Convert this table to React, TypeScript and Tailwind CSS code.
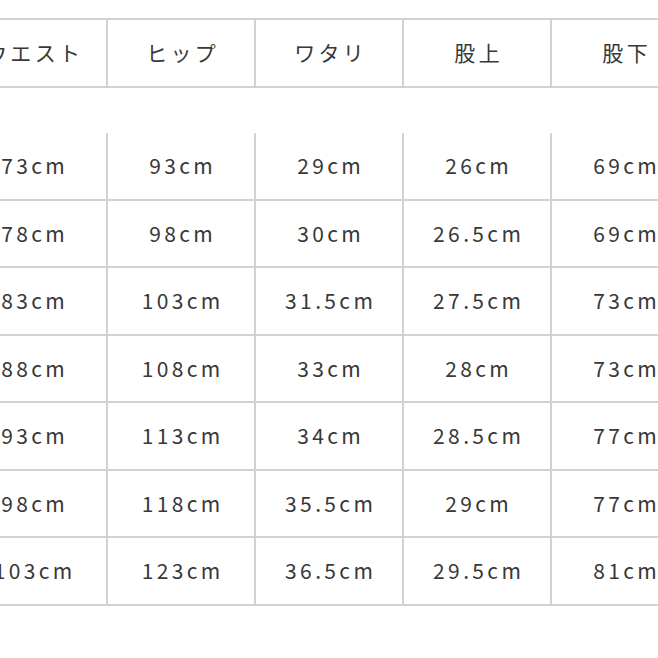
const headers = ['ウエスト', 'ヒップ', 'ワタリ', '股上', '股下'];

const rows = [
  ['73cm', '93cm', '29cm', '26cm', '69cm'],
  ['78cm', '98cm', '30cm', '26.5cm', '69cm'],
  ['83cm', '103cm', '31.5cm', '27.5cm', '73cm'],
  ['88cm', '108cm', '33cm', '28cm', '73cm'],
  ['93cm', '113cm', '34cm', '28.5cm', '77cm'],
  ['98cm', '118cm', '35.5cm', '29cm', '77cm'],
  ['103cm', '123cm', '36.5cm', '29.5cm', '81cm'],
];

function Cell({ text }: { text: string }) {
  return (
    <div className="w-[148px] shrink-0 h-full flex items-center justify-center border-r-2 border-[#d2d2d2]">
      <span className="pl-[0.16em] tracking-[0.16em]">{text}</span>
    </div>
  );
}

export default function App() {
  return (
    <div
      className="w-[658px] h-[658px] overflow-hidden bg-white text-[#383838] text-[21px]"
      style={{ fontFamily: '"Noto Sans CJK JP", "Noto Sans", sans-serif' }}
    >
      <div className="ml-[-40px] pt-[18px] w-[740px]">
        <div className="flex h-[70px] border-y-2 border-[#d2d2d2]">
          {headers.map((h) => (
            <Cell key={h} text={h} />
          ))}
        </div>

        {/* empty spacer row, no borders */}
        <div className="h-[45px]" />

        {rows.map((r, i) => (
          <div key={i} className="flex h-[67.5px] border-b-2 border-[#d2d2d2]">
            {r.map((v, j) => (
              <Cell key={j} text={v} />
            ))}
          </div>
        ))}
      </div>
    </div>
  );
}
